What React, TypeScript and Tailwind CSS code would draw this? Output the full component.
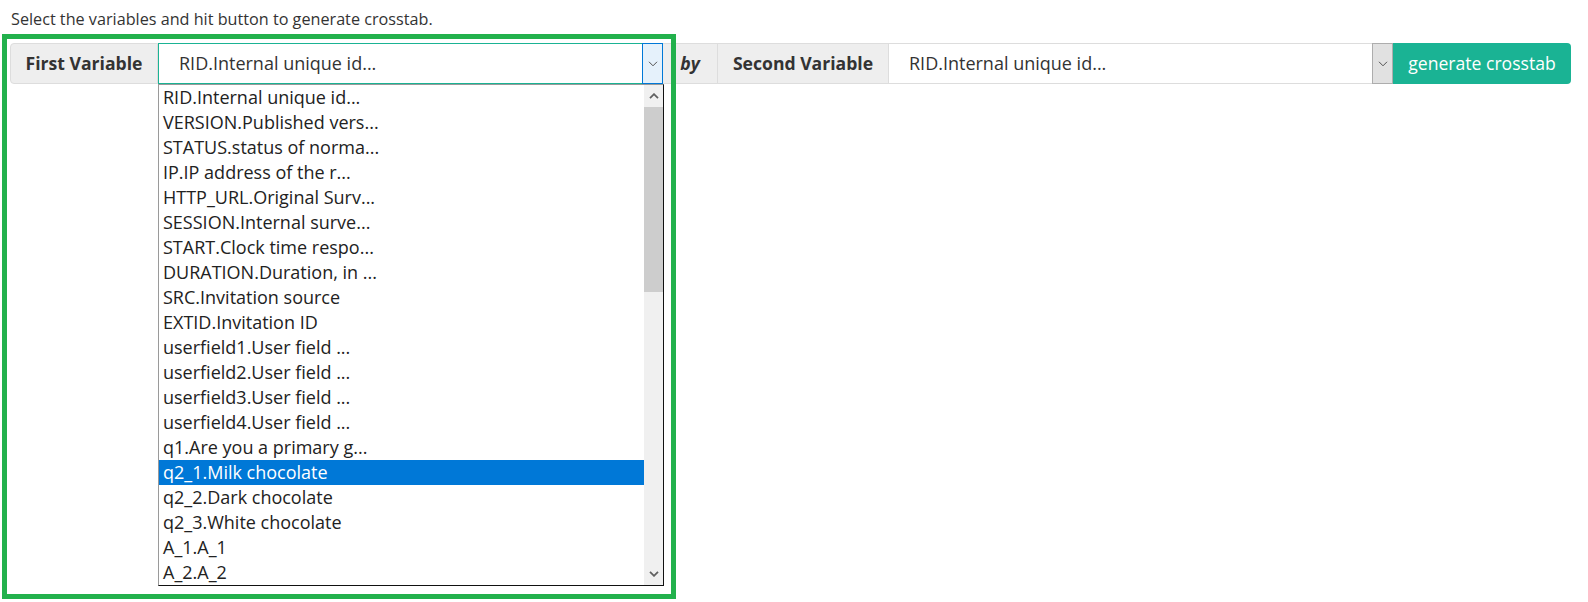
import React from "react";

const items = [
  "RID.Internal unique id...",
  "VERSION.Published vers...",
  "STATUS.status of norma...",
  "IP.IP address of the r...",
  "HTTP_URL.Original Surv...",
  "SESSION.Internal surve...",
  "START.Clock time respo...",
  "DURATION.Duration, in ...",
  "SRC.Invitation source",
  "EXTID.Invitation ID",
  "userfield1.User field ...",
  "userfield2.User field ...",
  "userfield3.User field ...",
  "userfield4.User field ...",
  "q1.Are you a primary g...",
  "q2_1.Milk chocolate",
  "q2_2.Dark chocolate",
  "q2_3.White chocolate",
  "A_1.A_1",
  "A_2.A_2",
];

const selected = "q2_1.Milk chocolate";

function Chevron({ up = false, bold = false }: { up?: boolean; bold?: boolean }) {
  return (
    <svg width="10" height="6" viewBox="0 0 10 6" fill="none">
      <path
        d={up ? "M1 5.2L5 1.2L9 5.2" : "M1 0.8L5 4.8L9 0.8"}
        stroke={bold ? "#606060" : "#505050"}
        strokeWidth={bold ? 1.8 : 1}
      />
    </svg>
  );
}

export default function App() {
  return (
    <div className="relative w-[1588px] h-[602px] bg-white text-[#333] font-['Open_Sans',sans-serif]">
      <p className="pt-[8px] pl-[11px] text-[16.2px] leading-[22px]">
        Select the variables and hit button to generate crosstab.
      </p>

      {/* Variable row */}
      <div className="mt-[13px] ml-[10px] flex h-[41px] text-[17.6px]">
        <div className="w-[148px] shrink-0 flex items-center justify-center rounded-l-[4px] border border-[#ddd] bg-[#eee] font-bold">
          First Variable
        </div>

        <div className="relative w-[505px] shrink-0 flex">
          <div className="flex-1 flex items-center pl-[20px] bg-white border border-[#1ab394] border-r-0 text-[18px]">
            RID.Internal unique id...
          </div>
          <div className="w-[21px] shrink-0 flex items-center justify-center bg-[#e5f1fb] border border-[#0078d7]">
            <Chevron />
          </div>

          {/* Open dropdown list */}
          <div className="absolute left-0 top-full z-10 w-[506px] h-[502px] flex bg-white border border-[#111] border-l-[#9a9a9a] border-t-[#9a9a9a] text-[18px]">
            <ul className="flex-1 overflow-hidden">
              {items.map((it) => (
                <li
                  key={it}
                  className={
                    it === selected
                      ? "h-[25px] leading-[25px] pl-[4px] bg-[#0078d7] text-white whitespace-nowrap"
                      : "h-[25px] leading-[25px] pl-[4px] text-[#222] whitespace-nowrap"
                  }
                >
                  {it}
                </li>
              ))}
            </ul>
            <div className="w-[19px] shrink-0 flex flex-col bg-[#f0f0f0]">
              <div className="h-[22px] flex items-center justify-center">
                <Chevron up bold />
              </div>
              <div className="h-[185px] bg-[#cdcdcd]" />
              <div className="flex-1" />
              <div className="h-[22px] flex items-center justify-center">
                <Chevron bold />
              </div>
            </div>
          </div>
        </div>

        <div className="w-[54px] shrink-0 flex items-center justify-center border-y border-[#ddd] bg-[#eee] font-bold italic">
          by
        </div>

        <div className="w-[172px] shrink-0 flex items-center justify-center border border-[#ddd] bg-[#eee] font-bold">
          Second Variable
        </div>

        <div className="w-[504px] shrink-0 flex">
          <div className="flex-1 flex items-center pl-[20px] bg-white border-y border-[#ddd] text-[18px]">
            RID.Internal unique id...
          </div>
          <div className="w-[21px] shrink-0 flex items-center justify-center bg-[#e1e1e1] border border-[#adadad]">
            <Chevron />
          </div>
        </div>

        <button className="w-[178px] shrink-0 rounded-r-[4px] bg-[#1ab394] text-white text-[17.6px]">
          generate crosstab
        </button>
      </div>

      {/* Annotation frame */}
      <div className="pointer-events-none absolute left-[2px] top-[34px] z-20 w-[674px] h-[565px] border-[5px] border-[#22b14c]" />
    </div>
  );
}
